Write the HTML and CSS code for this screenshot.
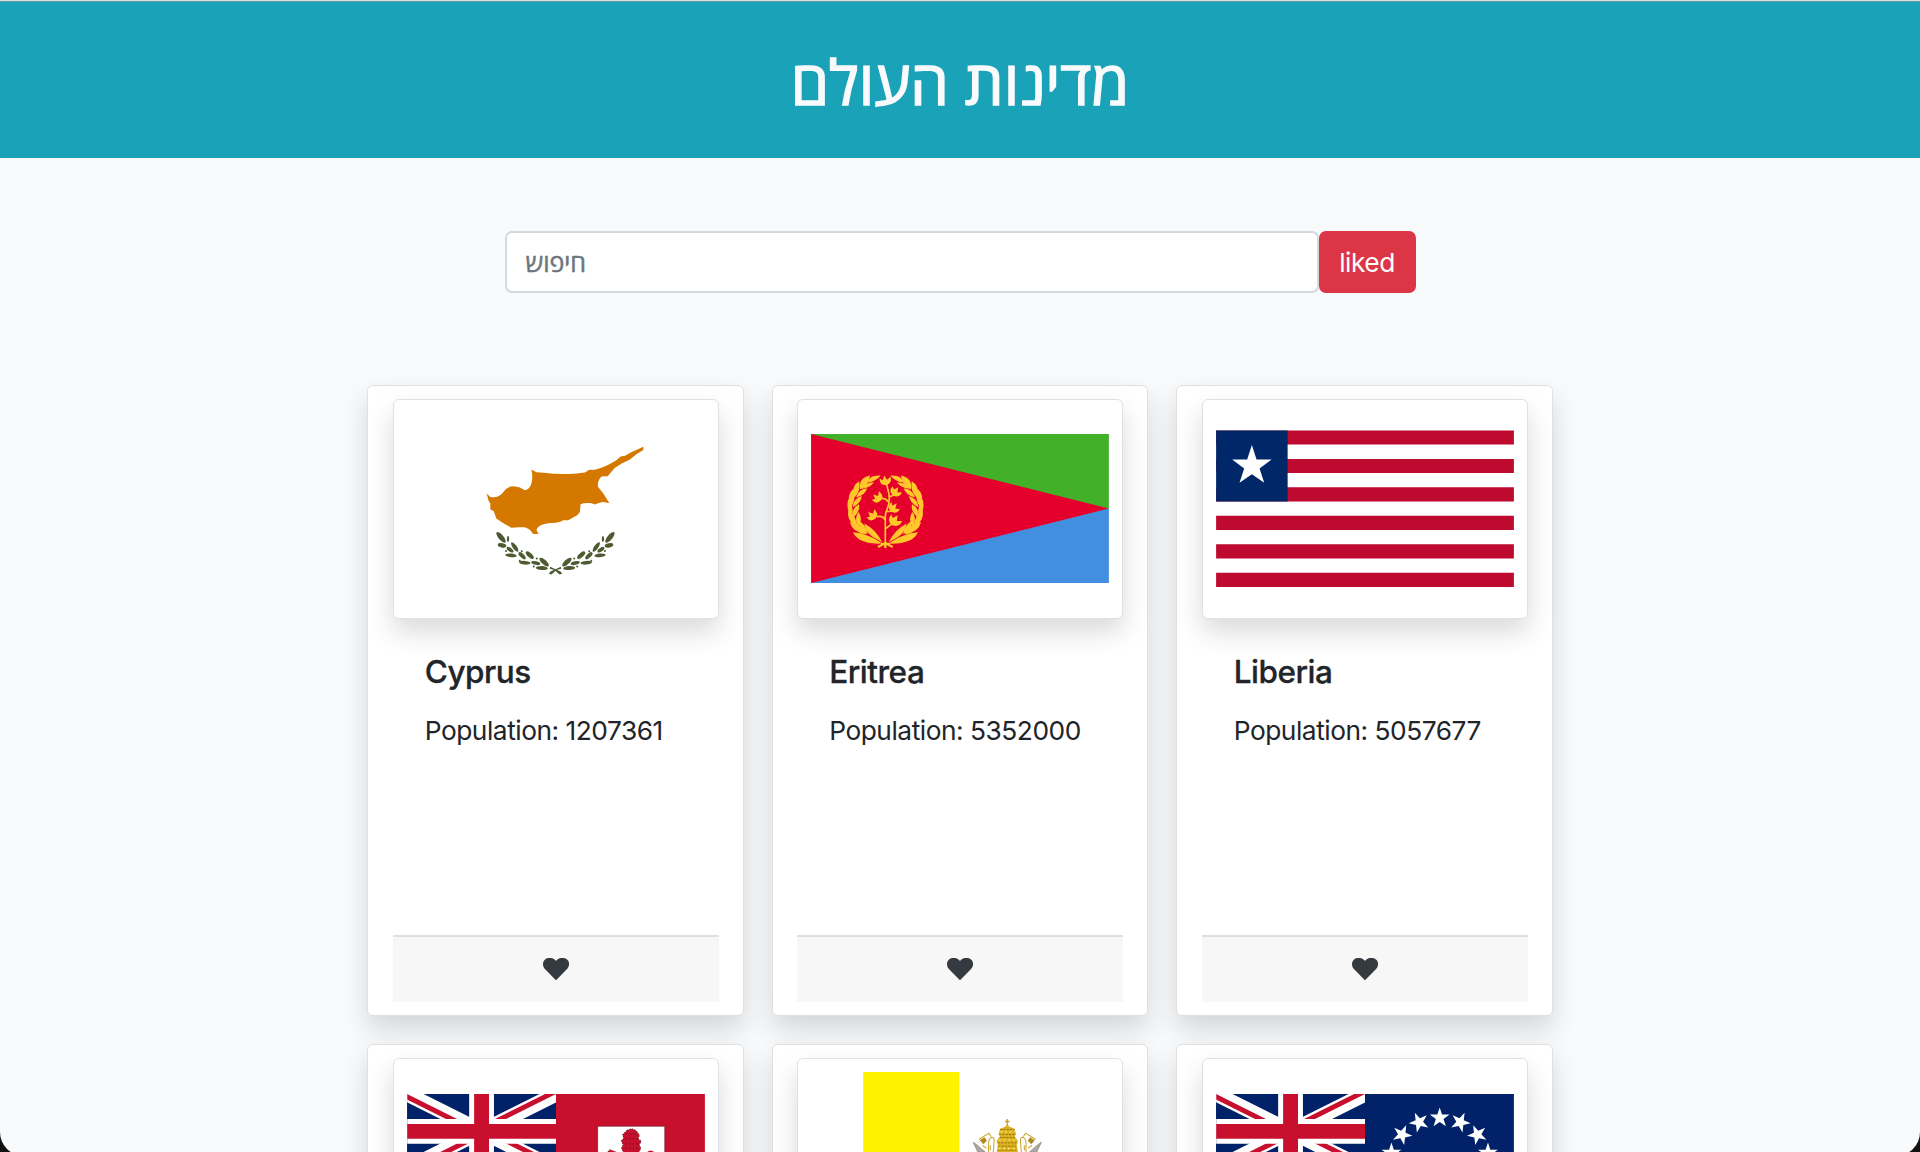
FILE: index.html
```html
<!DOCTYPE html>
<html lang="he">
<head>
<meta charset="utf-8">
<title>מדינות העולם</title>
<link rel="stylesheet" href="styles.css">
</head>
<body>
<svg class="defs" width="0" height="0">
  <defs>
    <symbol id="union" viewBox="0 0 60 30">
      <clipPath id="quarters"><path d="M30 15h30v15zM30 15v15H0zM30 15H0V0zM30 15V0h30z"/></clipPath>
      <path fill="#012169" d="M0 0h60v30H0z"/>
      <path stroke="#fff" stroke-width="6" d="M0 0l60 30M60 0L0 30"/>
      <path stroke="#c8102e" stroke-width="4" clip-path="url(#quarters)" d="M0 0l60 30M60 0L0 30"/>
      <path stroke="#fff" stroke-width="10" d="M30 0v30M0 15h60"/>
      <path stroke="#c8102e" stroke-width="6" d="M30 0v30M0 15h60"/>
    </symbol>
    <path id="star" d="M0 -62L14 -19H59L23 8L37 51L0 25L-37 51L-23 8L-59 -19H-14Z"/>
    <path id="heart" d="M39 67L5 32C-3 22 -1 9 8 3C18 -3 31 -1 39 9C47 -1 60 -3 70 3C80 9 81 22 73 32Z"/>
    <g id="olive">
      <ellipse rx="20" ry="7.500" transform="translate(94 321) rotate(50)"/>
      <ellipse rx="3.500" ry="9" transform="translate(115 326)"/>
      <ellipse rx="13" ry="6.500" transform="translate(97 345) rotate(12)"/>
      <ellipse rx="17" ry="6" transform="translate(135 350) rotate(55)"/>
      <ellipse rx="12" ry="5.500" transform="translate(121 358) rotate(35)"/>
      <ellipse rx="17" ry="5.500" transform="translate(124 375) rotate(5)"/>
      <ellipse rx="14" ry="6" transform="translate(157 376) rotate(45)"/>
      <ellipse rx="15" ry="6.500" transform="translate(180 374) rotate(42)"/>
      <ellipse rx="17" ry="5.500" transform="translate(165 397) rotate(5)"/>
      <ellipse rx="14" ry="5.500" transform="translate(198 398) rotate(12)"/>
      <ellipse rx="18" ry="7" transform="translate(223 395) rotate(42)"/>
      <ellipse rx="18" ry="6" transform="translate(216 413) rotate(3)"/>
      <circle cx="156" cy="363" r="3"/><circle cx="201" cy="384" r="3"/><circle cx="109" cy="362" r="3"/><circle cx="150" cy="391" r="3"/><circle cx="192" cy="408" r="3"/>
      <path d="M241 409L272 423L277 430L269 432L254 419L240 415Z"/>
    </g>
    <g id="laurel">
      <path d="M86 50Q92 28 124 31Q114 45 90 52Z"/>
      <path d="M62 71Q58 38 92 31Q91 58 64 73Z"/>
      <path d="M75 63Q85 50 104 52Q92 68 68 71Z"/>
      <path d="M45 94Q34 62 60 48Q65 76 47 96Z"/>
      <path d="M53 91Q60 72 84 69Q78 89 51 97Z"/>
      <path d="M33 122Q20 90 43 70Q52 101 36 124Z"/>
      <path d="M41 119Q45 99 68 92Q66 113 40 126Z"/>
      <path d="M35 153Q20 131 27 101Q45 126 39 151Z"/>
      <path d="M40 150Q39 127 59 117Q64 137 43 156Z"/>
      <path d="M49 181Q22 167 27 135Q50 151 53 179Z"/>
      <path d="M53 178Q46 156 58 140Q72 160 58 184Z"/>
      <path d="M79 207Q39 200 32 170Q61 174 80 202Z"/>
      <path d="M78 204Q55 190 61 167Q81 180 86 205Z"/>
      <path d="M124 235Q57 236 41 201Q84 204 124 231Z"/>
      <path d="M121 226Q80 210 75 175Q110 193 129 231Z"/>
    </g>
    <path id="bud" d="M0 0Q-20 0 -19 -20L-10 -15L-5 -29L3 -16L14 -25Q19 -5 0 0Z"/>
  </defs>
</svg>

<div class="page">
  <header class="banner"><h1>מדינות העולם</h1></header>

  <form class="search">
    <input class="search-input" type="text" placeholder="חיפוש">
    <button class="search-liked" type="button">liked</button>
  </form>

  <main class="countries">
    <article class="card">
      <div class="frame">
        <svg viewBox="-187 -51 891 573">
          <path fill="#d57800" d="M51 190L62 200Q85 205 100 187Q115 165 137 169Q150 170 165 180Q180 178 185 160Q190 140 185 118L200 126L222 128Q270 134 320 130L345 127L358 119L375 119Q410 110 440 90L452 79L465 77L485 66L520 50L520 60L500 72L480 88L455 100L435 113L420 130L413 138L395 139Q382 150 384 170L400 190L418 218L408 217Q395 212 375 223L365 219Q345 216 332 222L330 245L322 255L295 270L280 270Q265 280 240 278Q205 282 200 298L206 311L190 311Q180 295 165 291Q140 290 125 292Q100 280 80 265L72 242L62 238L62 220L57 212Z"/>
          <g fill="#4e5b31"><use href="#olive"/><use href="#olive" transform="translate(514 0) scale(-1 1)"/></g>
        </svg>
      </div>
      <div class="card-body"><h2>Cyprus</h2><p>Population: 1207361</p></div>
      <div class="card-footer"><svg class="heart" viewBox="0 0 79 67"><use href="#heart"/></svg></div>
    </article>

    <article class="card">
      <div class="frame">
        <svg viewBox="0 0 891 573">
          <path fill="#43b02a" d="M0 63H891V286H0Z"/>
          <path fill="#418fde" d="M0 286H891V509H0Z"/>
          <path fill="#e4002b" d="M0 63L891 286L0 509Z"/>
          <g transform="translate(84 156)" fill="#ffc72c">
            <use href="#laurel"/><use href="#laurel" transform="translate(277 0) scale(-1 1)"/>
            <path fill="none" stroke="#ffc72c" stroke-width="5" d="M138 240V158Q137 145 144 130Q152 112 149 86L140 50M138 165Q132 150 112 154M139 190Q151 181 164 171M141 138Q151 140 162 136M146 110Q140 98 124 100M150 95Q158 92 167 88"/>
            <path fill="none" stroke="#ffc72c" stroke-width="7" d="M116 245L138 233L160 245M125 236H152M138 230V248"/>
            <use href="#bud" transform="translate(140 60)"/>
            <use href="#bud" transform="translate(125 106) rotate(-42)"/>
            <use href="#bud" transform="translate(161 91) rotate(42)"/>
            <use href="#bud" transform="translate(109 160) rotate(-38)"/>
            <use href="#bud" transform="translate(154 138) rotate(48)"/>
            <use href="#bud" transform="translate(158 179) rotate(40) scale(1.150)"/>
          </g>
        </svg>
      </div>
      <div class="card-body"><h2>Eritrea</h2><p>Population: 5352000</p></div>
      <div class="card-footer"><svg class="heart" viewBox="0 0 79 67"><use href="#heart"/></svg></div>
    </article>

    <article class="card">
      <div class="frame">
        <svg viewBox="138 99 891 573">
          <path stroke="#bf0a30" stroke-width="42.600" d="M138 172.300H1029M138 257.600H1029M138 342.800H1029M138 428H1029M138 513.300H1029M138 598.600H1029"/>
          <path fill="#002868" d="M138 151H352V364H138Z"/>
          <use href="#star" fill="#fff" transform="translate(245 257)"/>
        </svg>
      </div>
      <div class="card-body"><h2>Liberia</h2><p>Population: 5057677</p></div>
      <div class="card-footer"><svg class="heart" viewBox="0 0 79 67"><use href="#heart"/></svg></div>
    </article>

    <article class="card">
      <div class="frame">
        <svg viewBox="143 456 891 573">
          <path fill="#c8102e" d="M143 522H1034V968H143Z"/>
          <use href="#union" x="143" y="522" width="445.500" height="223"/>
          <path fill="#fff" stroke="#6a1522" stroke-width="2" d="M713 618H914V800Q900 860 813 880Q727 860 713 800Z"/>
          <path fill="#c8102e" stroke="#7d1322" stroke-width="3" stroke-dasharray="5 3" d="M800 632Q814 621 828 632L838 645L834 655L843 663L837 674L842 684L836 697H868L856 706H770L742 697L750 689L770 697H791L785 684L790 673L784 662L792 654L788 644Z"/>
          <path stroke="#7d1322" stroke-width="4" stroke-dasharray="5 6" d="M798 641H829M795 656H833M795 671H833M795 684H833"/>
          <path fill="#c8102e" d="M745 696Q758 684 770 699M858 699Q870 684 883 696"/>
        </svg>
      </div>
      <div class="card-body"><h2>Bermuda</h2><p>Population: 63903</p></div>
      <div class="card-footer"><svg class="heart" viewBox="0 0 79 67"><use href="#heart"/></svg></div>
    </article>

    <article class="card">
      <div class="frame">
        <svg viewBox="96 126 891 573">
          <path fill="#fff200" d="M252 126H540V699H252Z"/>
          <path fill="none" stroke="#c9a227" stroke-width="4" d="M683 267V288M676 274H690"/>
          <path fill="#dcb21d" d="M676 290Q683 279 690 290L704 296L709 310L705 320L715 332L711 345L715 366H651L655 345L651 332L661 320L657 310L662 296Z"/>
          <path fill="none" stroke="#8f6d16" stroke-width="2.500" stroke-dasharray="7 3" d="M661 298H705M658 313H709M660 322H706M654 338H713M655 348H711M656 360H710"/>
          <path fill="none" stroke="#f9e27a" stroke-width="4" stroke-dasharray="6 8" d="M662 305H706M658 330H710M657 355H712"/>
          <g id="key">
            <path fill="#aaa" stroke="#8d7b55" stroke-width="2" d="M581 336L597 348L617 366H595Z"/>
            <path fill="#b08a1f" d="M601 330L615 321L622 332L611 342Z"/>
            <path fill="none" stroke="#c9a227" stroke-width="3" d="M598 328L628 309L635 319M609 346L621 354M627 366V340Q628 322 637 321Q646 321 643 340L641 366M632 361V345"/>
          </g>
          <use href="#key" transform="translate(1366 0) scale(-1 1)"/>
        </svg>
      </div>
      <div class="card-body"><h2>Vatican City</h2><p>Population: 451</p></div>
      <div class="card-footer"><svg class="heart" viewBox="0 0 79 67"><use href="#heart"/></svg></div>
    </article>

    <article class="card">
      <div class="frame">
        <svg viewBox="138 126 891 573">
          <path fill="#012169" d="M138 192H1029V638H138Z"/>
          <use href="#union" x="138" y="192" width="445.500" height="223"/>
          <g fill="#fff" transform="translate(807 415)">
            <use href="#star" transform="rotate(-72) translate(0 -152) scale(.5)"/>
            <use href="#star" transform="rotate(-48) translate(0 -152) scale(.5)"/>
            <use href="#star" transform="rotate(-24) translate(0 -152) scale(.5)"/>
            <use href="#star" transform="translate(0 -152) scale(.5)"/>
            <use href="#star" transform="rotate(24) translate(0 -152) scale(.5)"/>
            <use href="#star" transform="rotate(48) translate(0 -152) scale(.5)"/>
            <use href="#star" transform="rotate(72) translate(0 -152) scale(.5)"/>
          </g>
        </svg>
      </div>
      <div class="card-body"><h2>Cook Islands</h2><p>Population: 18100</p></div>
      <div class="card-footer"><svg class="heart" viewBox="0 0 79 67"><use href="#heart"/></svg></div>
    </article>
  </main>
</div>
</body>
</html>
```
FILE: styles.css
```css
* { box-sizing: border-box; }

body {
  margin: 0;
  height: 1152px;
  overflow: hidden;
  background: #111;
  color: #212529;
  font-family: Inter, "Liberation Sans", sans-serif;
  font-size: 26.3px;
}

.defs { display: block; }

.page {
  height: 1156px;
  overflow: hidden;
  background: #f8fafc;
  border-radius: 0 0 24px 24px;
}

.banner {
  display: flex;
  align-items: center;
  justify-content: center;
  height: 158px;
  border-top: 1px solid #d9dddd;
  background: #1aa2b8;
  box-shadow: inset 0 1px #5f9fab;
}

.banner h1 {
  margin: 0;
  padding-top: 3px;
  color: #f8fafc;
  font-family: "Open Sans", "Liberation Sans", sans-serif;
  font-size: 61.3px;
  font-weight: 500;
  direction: rtl;
  white-space: nowrap;
  -webkit-text-stroke: 1.5px #f8fafc;
}

.search {
  display: flex;
  width: 911px;
  height: 62px;
  margin: 73px auto 91.700px;
}

.search-input {
  flex: 1;
  min-width: 0;
  padding: 0 19px;
  border: 2px solid #d3d9dd;
  border-radius: 7px;
  background: #fff;
  font-family: "Open Sans", "Liberation Sans", sans-serif;
  font-size: 25px;
}

.search-input::placeholder {
  color: #6c757d;
  opacity: 1;
  -webkit-text-stroke: .5px #6c757d;
}

.search-liked {
  width: 97px;
  padding: 0;
  border: 0;
  border-radius: 7px;
  background: #dc3545;
  color: #fff;
  font: 400 26.300px Inter, sans-serif;
  letter-spacing: -0.5px;
}

.countries {
  display: grid;
  grid-template-columns: repeat(3, 376.500px);
  grid-auto-rows: 631px;
  gap: 28px;
  justify-content: center;
}

.card {
  display: flex;
  flex-direction: column;
  padding: 13.500px 24px 12.500px 24.500px;
  border: 1.500px solid #dfe0e1;
  border-radius: 6px;
  background: #fff;
  box-shadow: 0 13px 27px rgba(0, 0, 0, .15);
}

.frame {
  height: 219.500px;
  padding: 13px;
  border: 1.500px solid #dee2e6;
  border-radius: 6px;
  background: #fff;
  box-shadow: 0 13px 27px rgba(0, 0, 0, .15);
}

.frame svg { display: block; width: 100%; height: 100%; }

.card-body { flex: 1; padding: 33.500px 32px; }

.card-body h2 {
  margin: 0 0 20px;
  font-size: 31.500px;
  font-weight: 500;
  line-height: 40px;
  letter-spacing: -0.5px;
  -webkit-text-stroke: .3px #212529;
}

.card-body p {
  margin: 0;
  line-height: 38px;
  letter-spacing: -0.47px;
  white-space: nowrap;
}

.card-footer {
  display: flex;
  justify-content: center;
  height: 67px;
  padding-top: 20.500px;
  border-top: 2px solid #dfdfdf;
  background: #f7f7f7;
}

.heart { width: 26.300px; height: 22.300px; fill: #343a40; }
```
